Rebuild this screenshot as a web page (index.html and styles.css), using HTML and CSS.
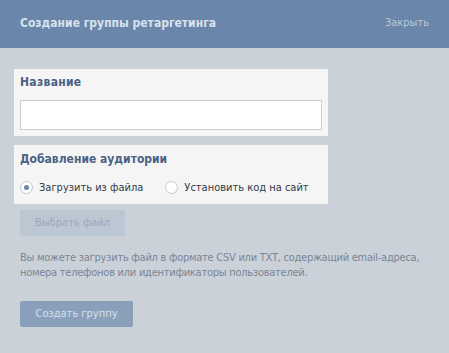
FILE: index.html
```html
<!DOCTYPE html>
<html>
<head>
<meta charset="utf-8">
<link rel="stylesheet" href="styles.css">
</head>
<body>
<div class="box">
  <div class="header">
    <div class="title">Создание группы ретаргетинга</div>
    <div class="close">Закрыть</div>
  </div>
  <div class="content">
    <div class="panel panel-name">
      <div class="label">Название</div>
      <div class="input"></div>
    </div>
    <div class="panel panel-aud">
      <div class="label">Добавление аудитории</div>
      <div class="radios">
        <div class="radio on"><span class="circle"></span><span>Загрузить из файла</span></div>
        <div class="radio"><span class="circle"></span><span>Установить код на сайт</span></div>
      </div>
    </div>
    <div class="btn btn-file">Выбрать файл</div>
    <div class="desc">Вы можете загрузить файл в формате CSV или TXT, содержащий email-адреса, номера телефонов или идентификаторы пользователей.</div>
    <div class="btn btn-create">Создать группу</div>
  </div>
</div>
</body>
</html>
```

FILE: styles.css
```css
html, body { margin: 0; padding: 0; }
body {
  width: 449px;
  height: 353px;
  background: #cbd1d9;
  font-family: "DejaVu Sans Condensed", "DejaVu Sans", sans-serif;
  font-size: 11px;
  overflow: hidden;
}
.header {
  height: 48px;
  background: #6a86aa;
  display: flex;
  align-items: center;
  justify-content: space-between;
  padding: 0 20px;
  box-sizing: border-box;
}
.title {
  color: #d8e2ee;
  font-weight: bold;
  font-size: 12px;
  padding-bottom: 3px;
}
.close {
  color: #b9c8db;
  font-size: 11px;
  padding-bottom: 3px;
}
.content {
  padding: 21px 14px 0 14px;
  display: flex;
  flex-direction: column;
}
.panel {
  width: 314px;
  background: #f5f5f6;
  box-sizing: border-box;
  padding: 0 6px;
}
.panel-name {
  height: 67px;
  padding-top: 5px;
}
.panel-aud {
  margin-top: 9px;
  height: 59px;
  padding-top: 6px;
}
.label {
  color: #4a6283;
  font-weight: bold;
  font-size: 12px;
  height: 16px;
  line-height: 16px;
}
.panel-name .label { letter-spacing: 0.3px; }
.input {
  margin-top: 10px;
  height: 30px;
  background: #fff;
  border: 1px solid #c5ced9;
  box-sizing: border-box;
}
.radios {
  display: flex;
  margin-top: 13px;
  color: #333b45;
}
.radio {
  display: flex;
  align-items: center;
  gap: 6px;
  height: 14px;
}
.radio + .radio { margin-left: 22px; }
.circle {
  width: 13px;
  height: 13px;
  box-sizing: border-box;
  border: 1px solid #c3cad3;
  border-radius: 50%;
  background: #fff;
  position: relative;
}
.radio.on .circle::after {
  content: "";
  position: absolute;
  left: 3px; top: 3px;
  width: 5px; height: 5px;
  border-radius: 50%;
  background: #6a86aa;
}
.btn {
  margin-left: 6px;
  height: 26px;
  line-height: 26px;
  border-radius: 2px;
  text-align: center;
  box-sizing: border-box;
}
.btn-file {
  margin-top: 6px;
  width: 105px;
  background: #bcc7d4;
  color: #9aa9ba;
}
.desc {
  margin: 14px 0 0 6px;
  color: #7a8594;
  line-height: 15px;
  width: 425px;
  letter-spacing: -0.25px;
}
.btn-create {
  margin-top: 21px;
  width: 113px;
  background: #8aa0ba;
  color: #d6e0eb;
}
```
